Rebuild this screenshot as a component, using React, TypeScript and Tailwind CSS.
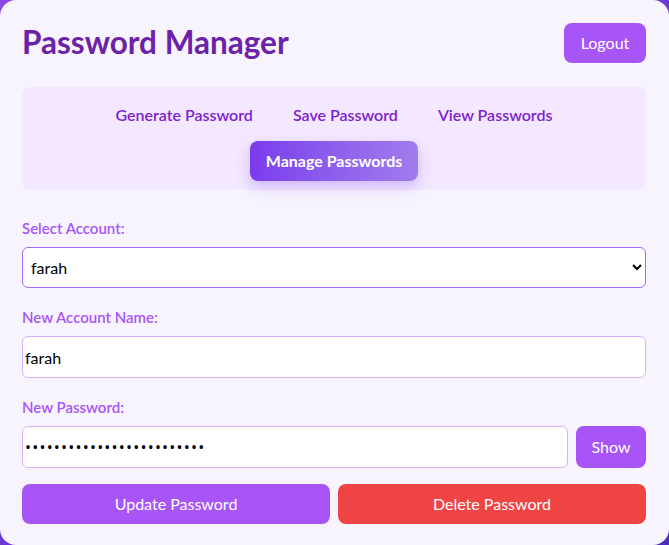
import { useState } from 'react';

const tabs = ['Generate Password', 'Save Password', 'View Passwords', 'Manage Passwords'];

export default function App() {
  const [active] = useState('Manage Passwords');

  return (
    <div
      className="min-h-[545px] bg-gradient-to-br from-[#8b45e6] to-[#4f2bc2]"
      style={{ fontFamily: 'Lato, "Open Sans", sans-serif' }}
    >
      <div className="h-[545px] w-full rounded-2xl bg-[#f7f4fd] pt-[23px] pr-[23px] pl-[22px]">
        <div className="flex items-center justify-between">
          <h1 className="text-[31.5px] leading-none font-bold text-[#6b21a8]">Password Manager</h1>
          <button className="h-10 w-[82px] rounded-lg bg-[#a855f7] text-base text-white">Logout</button>
        </div>

        <nav className="mt-6 flex flex-wrap justify-center gap-y-1.5 rounded-lg bg-[#f3e8ff] px-4 pt-2 pb-[9px]">
          {tabs.map((t) =>
            t === active ? (
              <button
                key={t}
                className="h-10 rounded-lg bg-gradient-to-r from-[#7c3aed] to-[#a17cec] px-4 text-base font-bold text-white shadow-[0_6px_14px_rgba(139,92,246,0.35)]"
              >
                {t}
              </button>
            ) : (
              <button key={t} className="h-10 px-5 text-base font-semibold text-[#7e22ce]">
                {t}
              </button>
            )
          )}
        </nav>

        <div className="mt-[26px]">
          <label className="mb-[7px] block text-[15px] leading-6 font-semibold text-[#a855f7]">Select Account:</label>
          <select className="h-[41px] w-full rounded-md border border-[#a36af5] bg-white px-1 text-base text-black">
            <option>farah</option>
          </select>
        </div>

        <div className="mt-[17px]">
          <label className="mb-[7px] block text-[15px] leading-6 font-semibold text-[#a855f7]">New Account Name:</label>
          <input
            defaultValue="farah"
            className="h-[42px] w-full rounded-md border border-[#d8b4fe] bg-white px-0.5 text-base text-black outline-none"
          />
        </div>

        <div className="mt-[17px]">
          <label className="mb-[7px] block text-[15px] leading-6 font-semibold text-[#a855f7]">New Password:</label>
          <div className="flex gap-2">
            <input
              type="password"
              defaultValue="abcdefghijklmnopqrstuvwxy"
              className="h-[42px] flex-1 rounded-md border border-[#d8b4fe] bg-white px-0.5 font-['Open_Sans',sans-serif] text-base tracking-[1.2px] text-black outline-none"
            />
            <button className="h-[42px] w-[70px] rounded-lg bg-[#a855f7] text-base text-white">Show</button>
          </div>
        </div>

        <div className="mt-4 flex gap-2">
          <button className="h-10 flex-1 rounded-lg bg-[#a855f7] text-base text-white">Update Password</button>
          <button className="h-10 flex-1 rounded-lg bg-[#ef4444] text-base text-white">Delete Password</button>
        </div>
      </div>
    </div>
  );
}
